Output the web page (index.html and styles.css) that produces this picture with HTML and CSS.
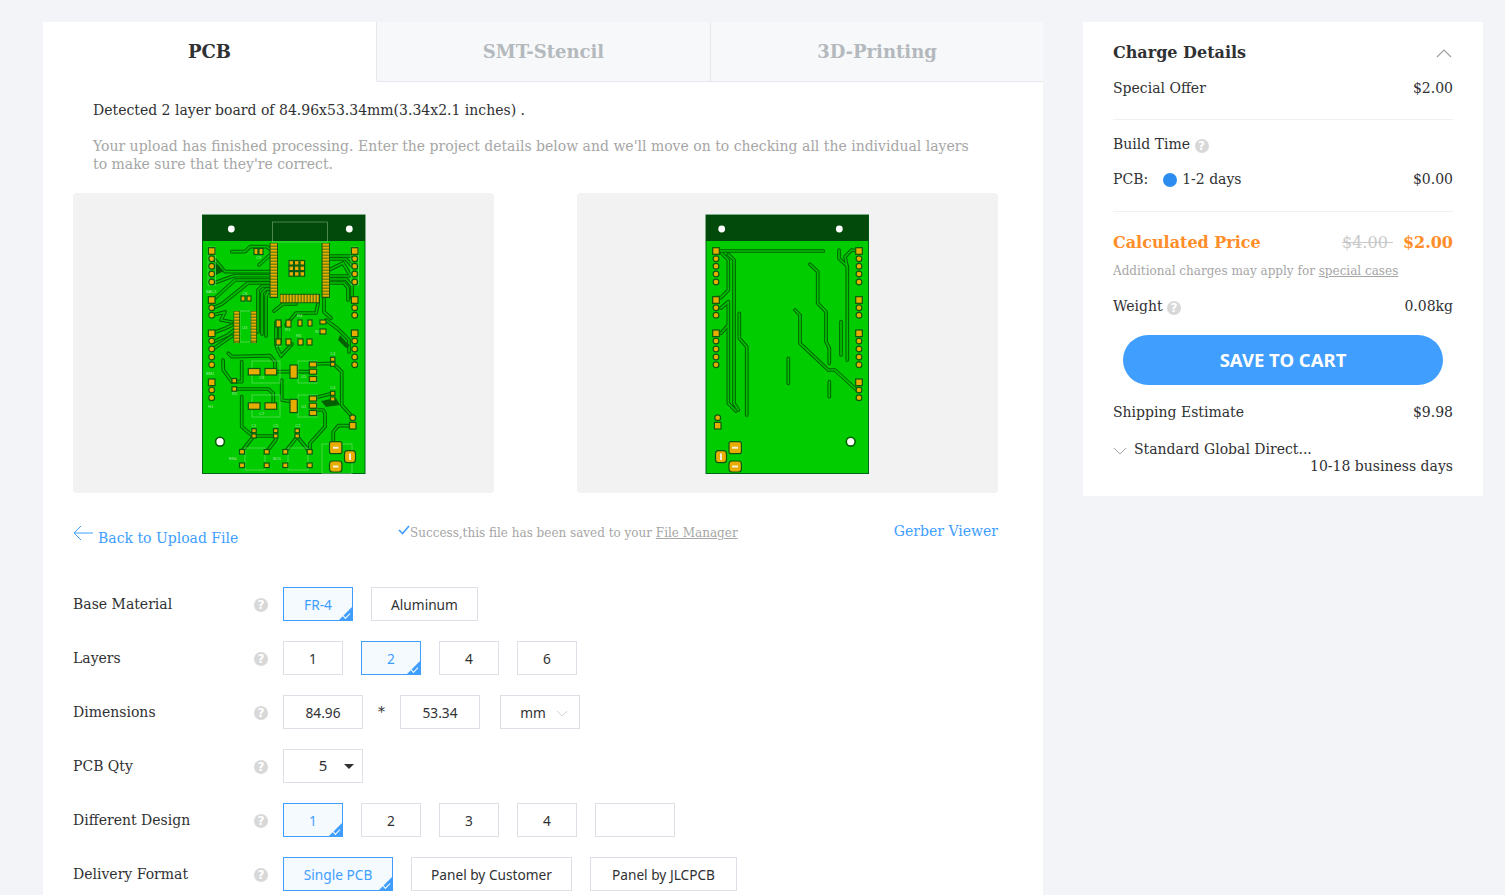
FILE: index.html
```html
<!DOCTYPE html>
<html>
<head>
<meta http-equiv="Content-Type" content="text/html; charset=utf-8" />
<title>Online PCB Quote</title>
<link rel="stylesheet" href="styles.css">
</head>
<body>
<div class="page">
 <div class="main">
  <div class="tabs">
   <div class="tab active">PCB</div>
   <div class="tab">SMT-Stencil</div>
   <div class="tab">3D-Printing</div>
  </div>

  <p class="detected">Detected 2 layer board of 84.96x53.34mm(3.34x2.1 inches) .</p>
  <p class="notice">Your upload has finished processing. Enter the project details below and we'll move on to checking all the individual layers to make sure that they're correct.</p>

  <div class="previews">
   <div class="preview">
    <!-- top layer -->
    <svg class="board" viewBox="201 214 165 260" width="165" height="260">
     <defs>
      <g id="top-tr">
       <polyline points="231.7,251.7 245,251.7 250,246.7 267,246.7 271,250"/>
       <polyline points="259,265 270,255"/>
       <polyline points="215,260 225,271.7 271,271.7"/>
       <polyline points="211.7,282 217,282 234,275.7 271,275.7"/>
       <polyline points="213,300 235,280 271,280"/>
       <polyline points="213,308 222,304 248,283 271,283"/>
       <polyline points="271,286 262,286 258,290 258,332"/>
       <polyline points="271,289 266,289 262,293 262,334"/>
       <polyline points="271,292 268,292 266,296 266,336"/>
       <polyline points="213,315 225,312 221,320 232,322"/>
       <polyline points="213,333 226,328 232,325"/>
       <polyline points="213,342 228,335 234,330"/>
       <polyline points="213,349 232,336"/>
       <polyline points="274,311 283,304 296,304"/>
       <polyline points="286,325 296,313 316,313 318,304"/>
       <polyline points="276,322 276,345"/>
       <polyline points="280,322 280,343"/>
       <polyline points="324,298 324,312 331,318"/>
       <polyline points="329,283 344,283 348,288 348,300"/>
       <polyline points="329,279 346,279 352,286 352,298"/>
       <polyline points="329,276 349,276"/>
       <polyline points="329,256 350,256"/>
       <polyline points="329,259 346,259 352,266"/>
       <polyline points="329,270 343,263 350,275"/>
       <polyline points="326,320 338,329 349,340 349,352"/>
       <polyline points="223,360 223.3,370 232,382"/>
       <polyline points="228.3,353.3 231.7,356.7 270,355.7 275,361.7 275,371.7"/>
       <polyline points="241.7,361.7 241.7,381.7 234,381.7"/>
       <polyline points="234.3,389 268.3,389 273.3,393.3 273.3,406"/>
       <polyline points="281.7,380 281.7,400 291.7,401.7"/>
       <polyline points="276.7,371.7 290,371.7"/>
       <polyline points="297,371.7 310,371.7"/>
       <polyline points="313,364 332.7,363.3 341.7,371.7 341.7,405 352.7,417.3"/>
       <polyline points="313,398.3 332.7,393.3"/>
       <polyline points="313,410 323.3,410 325,413.3 325,426.7 310,443.3 310,451.7"/>
       <polyline points="241.7,396.7 241.7,426.7 253.3,436.7 254,436 275.7,436 275.7,440 266.7,451.7"/>
       <polyline points="253,437 242,451"/>
       <polyline points="297.3,436.7 285.3,451.7"/>
       <polyline points="297.3,436.7 305,446 309,451"/>
       <polyline points="352.7,425.7 338.3,425.7 333.3,431.7 333.3,443.3"/>
       <polyline points="277,340 277,348 281,356 292,344"/>
      </g>
      <g id="bot-tr">
       <polyline points="716,251 823.3,251"/>
       <polyline points="721.7,253.3 728.3,260 728.3,290 721,297.7 716,297.7"/>
       <polyline points="728.3,254.3 734,260 734,403.3 738.3,410"/>
       <polyline points="728.3,301.7 728.3,403.3 736,411"/>
       <polyline points="728.3,301.7 721,308"/>
       <polyline points="728.3,325 721,333.3"/>
       <polyline points="739.3,313.3 739.3,338.3 746.7,346.7 746.7,415"/>
       <polyline points="810,264.3 817.7,271.7 817.7,303.3 826,311.7 826,341.7 829.3,348.3 829.3,363.3"/>
       <polyline points="795,310 800,315 800,343.3 828.3,370 835,370 856.7,390"/>
       <polyline points="788.3,358.3 788.3,383.3"/>
       <polyline points="829.3,381.7 829.3,396.7"/>
       <polyline points="841,321.7 841,355"/>
       <polyline points="859,251 851.7,250 845,256.7 847.3,268 847.3,360"/>
       <polyline points="839,250 839,258.3 847,266"/>
      </g>
      <g id="conn-rows">
       <circle cx="0" cy="258.7" r="2.9"/><circle cx="0" cy="266.3" r="2.9"/><circle cx="0" cy="274" r="2.9"/><circle cx="0" cy="282" r="2.9"/>
       <circle cx="0" cy="307.7" r="2.9"/><circle cx="0" cy="315.3" r="2.9"/>
       <circle cx="0" cy="341" r="2.9"/><circle cx="0" cy="349" r="2.9"/><circle cx="0" cy="357" r="2.9"/><circle cx="0" cy="364.7" r="2.9"/>
       <rect x="-3.3" y="247.7" width="6.6" height="6.6"/><rect x="-3.3" y="296.7" width="6.6" height="6.6"/><rect x="-3.3" y="330" width="6.6" height="6.6"/>
      </g>
     </defs>

     <rect class="pcb" x="202.5" y="215" width="162.5" height="258.5"/>
     <rect class="band" x="202.5" y="215" width="162.5" height="26"/>
     <use href="#top-tr" class="tr-out"/>
     <use href="#top-tr" class="tr-in"/>
     <polygon class="flood" points="215,263 224,271 216,275"/>
     <polygon class="flood" points="340,405 336,398 321,401 326,407"/>
     <polygon class="flood" points="340,335 350,346 346,348 338,340"/>

     <circle class="hole" cx="231.3" cy="229" r="3.4"/>
     <circle class="hole" cx="349.3" cy="229" r="3.4"/>
     <circle class="hole-ring" cx="220" cy="441.7" r="4.4"/>

     <!-- silk -->
     <g class="silk">
      <rect x="272.3" y="222" width="55.4" height="20"/>
      <rect x="240" y="311" width="10.5" height="31"/>
      <rect x="208" y="247" width="7.5" height="38"/>
      <rect x="351" y="247" width="7.5" height="38"/>
      <rect x="252" y="361" width="28" height="22"/>
      <rect x="252" y="395" width="28" height="22"/>
      <rect x="298" y="361" width="19" height="22"/>
      <rect x="298" y="395" width="19" height="22"/>
      <rect x="245" y="448" width="20" height="22"/>
      <rect x="288" y="448" width="20" height="22"/>
      <rect x="322" y="444" width="30" height="29.5"/>
     </g>
     <g class="silk-text">
      <text x="256" y="259">C9</text><text x="206" y="293">BAC1</text><text x="242" y="295">C8</text>
      <text x="242" y="329">U3</text><text x="285" y="331">R1</text><text x="297" y="317">R4</text>
      <text x="296" y="337">R6</text><text x="315" y="333">R3</text><text x="276" y="347">R5</text>
      <text x="259" y="379">C8</text><text x="301" y="378">U5</text><text x="259" y="415">C7</text>
      <text x="301" y="408">U1</text><text x="232" y="395">R2</text><text x="206" y="375">BM1</text>
      <text x="208" y="408">H1</text><text x="251" y="427">C1</text><text x="273" y="427">C5</text>
      <text x="295" y="427">C2</text><text x="330" y="355">C4</text><text x="330" y="389">C4</text>
      <text x="229" y="460">EN0</text><text x="273" y="460">BO1</text>
     </g>

     <!-- pads -->
     <g class="pad-strip">
      <rect x="269.5" y="243" width="8.5" height="55"/>
      <rect x="321.5" y="243" width="8.5" height="55"/>
      <rect x="280" y="293.8" width="40" height="9.4"/>
      <rect x="233.5" y="311" width="6.5" height="32"/>
      <rect x="250.5" y="311" width="6.5" height="32"/>
     </g>
     <g class="pad-lines">
      <line class="v" x1="273.8" y1="243.5" x2="273.8" y2="297.5"/>
      <line class="v" x1="325.8" y1="243.5" x2="325.8" y2="297.5"/>
      <line class="h" x1="280.5" y1="298.5" x2="319.5" y2="298.5"/>
      <line class="c" x1="236.7" y1="311.5" x2="236.7" y2="342.5"/>
      <line class="c" x1="253.7" y1="311.5" x2="253.7" y2="342.5"/>
     </g>
     <g class="pad">
      <rect x="289" y="260.5" width="4.6" height="4.6"/><rect x="294.4" y="260.5" width="4.6" height="4.6"/><rect x="300" y="260.5" width="4.6" height="4.6"/>
      <rect x="289" y="266" width="4.6" height="4.6"/><rect x="294.4" y="266" width="4.6" height="4.6"/><rect x="300" y="266" width="4.6" height="4.6"/>
      <rect x="289" y="271.6" width="4.6" height="4.6"/><rect x="294.4" y="271.6" width="4.6" height="4.6"/><rect x="300" y="271.6" width="4.6" height="4.6"/>
      <use href="#conn-rows" x="211.7"/>
      <use href="#conn-rows" x="354.7"/>
      <circle cx="211.7" cy="390" r="2.9"/><circle cx="211.7" cy="397.7" r="2.9"/><rect x="208.4" y="379" width="6.6" height="6.6"/>
      <rect x="254" y="248.5" width="4" height="6"/><rect x="259" y="248.5" width="4" height="6"/>
      <rect x="241" y="296" width="4" height="5"/><rect x="247" y="296" width="4" height="5"/>
      <rect x="276" y="320" width="5" height="7"/><rect x="286" y="320" width="5" height="7"/>
      <rect x="298" y="320" width="4" height="6"/><rect x="308" y="320" width="4" height="6"/>
      <rect x="320" y="320" width="6" height="4"/><rect x="320" y="329" width="6" height="5"/>
      <rect x="276" y="339" width="5" height="6"/><rect x="286" y="339" width="5" height="6"/>
      <rect x="298" y="339" width="5" height="6"/><rect x="307" y="339" width="5" height="6"/>
      <rect x="248.3" y="368.5" width="11.7" height="6.5"/><rect x="265" y="368.5" width="11.7" height="6.5"/>
      <rect x="290" y="365" width="7.3" height="13.3"/>
      <rect x="309.3" y="362" width="7.4" height="5"/><rect x="309.3" y="369.2" width="7.4" height="5"/><rect x="309.3" y="376.5" width="7.4" height="5"/>
      <rect x="248.3" y="402.8" width="11.7" height="6.5"/><rect x="265" y="402.8" width="11.7" height="6.5"/>
      <rect x="290" y="399.3" width="7.3" height="13.3"/>
      <rect x="309.3" y="396" width="7.4" height="5"/><rect x="309.3" y="403.2" width="7.4" height="5"/><rect x="309.3" y="410.5" width="7.4" height="5"/>
      <rect x="330.5" y="357.3" width="4.4" height="4"/><rect x="330.5" y="362.3" width="4.4" height="4"/>
      <rect x="330.5" y="391.3" width="4.4" height="4"/><rect x="330.5" y="397" width="4.4" height="4"/>
      <rect x="232" y="378.5" width="4.6" height="4.4"/><rect x="232" y="386.8" width="4.6" height="4.4"/>
      <rect x="251.8" y="428.7" width="4.4" height="4"/><rect x="251.8" y="434" width="4.4" height="4"/>
      <rect x="273.5" y="428.7" width="4.4" height="4"/><rect x="273.5" y="434" width="4.4" height="4"/>
      <rect x="295" y="428.7" width="4.4" height="4"/><rect x="295" y="434" width="4.4" height="4"/>
      <rect x="239.5" y="449.5" width="5" height="4.6"/><rect x="264.2" y="449.5" width="5" height="4.6"/><rect x="282.8" y="449.5" width="5" height="4.6"/><rect x="307.2" y="449.5" width="5" height="4.6"/>
      <rect x="239.5" y="463" width="5" height="4.6"/><rect x="264.2" y="463" width="5" height="4.6"/><rect x="282.8" y="463" width="5" height="4.6"/><rect x="307.2" y="463" width="5" height="4.6"/>
      <circle cx="352.7" cy="417.7" r="2.9"/><rect x="349.4" y="422.4" width="6.6" height="6.6"/>
      <rect x="329.5" y="441.7" width="12.4" height="12" rx="2"/>
      <rect x="344.5" y="450.7" width="11" height="12" rx="3"/>
      <rect x="329.5" y="461" width="12.4" height="11" rx="3"/>
     </g>
     <g class="slot">
      <line x1="333" y1="447.7" x2="338.5" y2="447.7"/>
      <line x1="350" y1="453.5" x2="350" y2="460"/>
      <line x1="333" y1="466.5" x2="338.5" y2="466.5"/>
     </g>
    </svg>
   </div>

   <div class="preview">
    <!-- bottom layer -->
    <svg class="board" viewBox="705 214 165 260" width="165" height="260">
     <rect class="pcb" x="706" y="215" width="162.5" height="258.5"/>
     <rect class="band" x="706" y="215" width="162.5" height="26"/>
     <use href="#bot-tr" class="tr-out"/>
     <use href="#bot-tr" class="tr-in"/>
     <circle class="hole" cx="721.7" cy="229" r="3.4"/>
     <circle class="hole" cx="839.3" cy="229" r="3.4"/>
     <circle class="hole-ring" cx="850.7" cy="441.7" r="4.4"/>
     <g class="pad">
      <use href="#conn-rows" x="716"/>
      <use href="#conn-rows" x="859"/>
      <circle cx="859" cy="390" r="2.9"/><circle cx="859" cy="397.7" r="2.9"/><rect x="855.7" y="379" width="6.6" height="6.6"/>
      <circle cx="717.7" cy="417.7" r="2.9"/><rect x="714.4" y="422.4" width="6.6" height="6.6"/>
      <rect x="729" y="441.7" width="12.4" height="12" rx="2"/>
      <rect x="715.5" y="450.7" width="11" height="12" rx="3"/>
      <rect x="729" y="461" width="12.4" height="11" rx="3"/>
     </g>
     <g class="slot">
      <line x1="732" y1="447.7" x2="738" y2="447.7"/>
      <line x1="721" y1="453.5" x2="721" y2="460"/>
      <line x1="732" y1="466.5" x2="738" y2="466.5"/>
     </g>
    </svg>
   </div>
  </div>

  <div class="links">
   <a class="back">
    <svg class="back-arrow" viewBox="0 0 20 16" width="20" height="16"><path d="M8 1 L1 8 L8 15 M1 8 H20"/></svg>
    <span>Back to Upload File</span>
   </a>
   <div class="saved">
    <svg class="saved-check" viewBox="0 0 12 10" width="12" height="10"><path d="M1 5 L4.5 8.5 L11 1"/></svg>Success,this file has been saved to your <u>File Manager</u>
   </div>
   <a class="gerber">Gerber Viewer</a>
  </div>

  <div class="form">
   <div class="row">
    <label>Base Material</label><i class="help">?</i>
    <div class="opts"><span class="opt on w70">FR-4</span><span class="opt w107">Aluminum</span></div>
   </div>
   <div class="row">
    <label>Layers</label><i class="help">?</i>
    <div class="opts"><span class="opt w60">1</span><span class="opt on w60">2</span><span class="opt w60">4</span><span class="opt w60">6</span></div>
   </div>
   <div class="row">
    <label>Dimensions</label><i class="help">?</i>
    <div class="opts dims">
     <span class="opt w80">84.96</span><b class="times">*</b><span class="opt w80">53.34</span>
     <span class="opt w80 unit">mm<svg class="unit-arrow" viewBox="0 0 12 7" width="12" height="7"><path d="M1 1 L6 6 L11 1"/></svg></span>
    </div>
   </div>
   <div class="row">
    <label>PCB Qty</label><i class="help">?</i>
    <div class="opts"><span class="opt w80 qty">5<em class="caret"></em></span></div>
   </div>
   <div class="row">
    <label>Different Design</label><i class="help">?</i>
    <div class="opts"><span class="opt on w60">1</span><span class="opt w60">2</span><span class="opt w60">3</span><span class="opt w60">4</span><span class="opt w80"></span></div>
   </div>
   <div class="row">
    <label>Delivery Format</label><i class="help">?</i>
    <div class="opts"><span class="opt on w110">Single PCB</span><span class="opt w161">Panel by Customer</span><span class="opt w147">Panel by JLCPCB</span></div>
   </div>
  </div>
 </div>

 <div class="side">
  <div class="side-head">
   <h3>Charge Details</h3>
   <svg class="chev" viewBox="0 0 16 10" width="16" height="10"><path d="M1 9 L8 2 L15 9"/></svg>
  </div>
  <div class="line offer"><span>Special Offer</span><span>$2.00</span></div>
  <div class="sep"></div>
  <div class="line build"><span>Build Time <i class="help">?</i></span></div>
  <div class="line pcb-time"><span>PCB:<em class="dot"></em>1-2 days</span><span>$0.00</span></div>
  <div class="sep"></div>
  <div class="line price"><span>Calculated Price</span><span><s>$4.00&nbsp;</s><b>$2.00</b></span></div>
  <p class="extra">Additional charges may apply for <u>special cases</u></p>
  <div class="line weight"><span>Weight <i class="help">?</i></span><span>0.08kg</span></div>
  <div class="save">SAVE TO CART</div>
  <div class="line ship"><span>Shipping Estimate</span><span>$9.98</span></div>
  <div class="method">
   <svg class="method-arrow" viewBox="0 0 14 8" width="14" height="8"><path d="M1 1 L7 7 L13 1"/></svg>Standard Global Direct...
  </div>
  <div class="days">10-18 business days</div>
 </div>
</div>
</body>
</html>
```

FILE: styles.css
```css
* {
	margin: 0;
	padding: 0;
	box-sizing: border-box;
}
html, body {
	height: 895px;
	overflow: hidden;
}
body {
	background: #f2f4f7;
	font-family: "DejaVu Serif", serif;
	font-size: 14px;
	color: #303133;
}
.page {
	display: flex;
	align-items: flex-start;
	gap: 40px;
	padding: 22px 0 0 43px;
	height: 895px;
}

/* left card */
.main {
	width: 1000px;
	height: 873px;
	background: #fff;
	flex: none;
}
.tabs {
	display: flex;
	height: 60px;
}
.tab {
	width: 334px;
	line-height: 60px;
	text-align: center;
	font-size: 18px;
	font-weight: bold;
	color: #b4b9bd;
	background: #f7f8fa;
	border-bottom: 1px solid #e4e7ed;
	border-right: 1px solid #e4e7ed;
}
.tab:last-child {
	width: 332px;
	border-right: 0;
}
.tab.active {
	color: #303133;
	background: #fff;
	border-bottom-color: #fff;
}
.detected {
	padding: 19px 0 0 50px;
	line-height: 18px;
}
.notice {
	padding: 19px 70px 0 50px;
	line-height: 17.5px;
	color: #a6a6a6;
}
.previews {
	display: flex;
	gap: 83px;
	padding: 20px 0 0 30px;
}
.preview {
	width: 421px;
	height: 300px;
	background: #f2f2f2;
	border-radius: 4px;
	display: flex;
	justify-content: center;
	padding-top: 21px;
}
.board {
	display: block;
}

/* board art */
.pcb { fill: #00cc00; stroke: #00661a; stroke-width: 1; }
.band { fill: #024a0c; }
.tr-out, .tr-in { fill: none; stroke-linejoin: round; stroke-linecap: round; }
.tr-out { stroke: #006000; stroke-width: 3.7; }
.tr-in { stroke: #00c000; stroke-width: 1.7; }
.flood { fill: #006000; }
.hole { fill: #fff; }
.hole-ring { fill: #fff; stroke: #006000; stroke-width: 1.6; }
.silk rect { fill: none; stroke: #cfeec9; stroke-width: .6; opacity: .6; }
.silk-text text { fill: #d8f5d2; font-family: "Liberation Sans", sans-serif; font-size: 4px; opacity: .8; }
.pad-strip rect { fill: #0a5c10; }
.pad-lines line { stroke: #e8ac00; }
.pad-lines .v { stroke-width: 6.5; stroke-dasharray: 2.2 .8; }
.pad-lines .h { stroke-width: 7.4; stroke-dasharray: 2.2 .8; }
.pad-lines .c { stroke-width: 5; stroke-dasharray: 2.2 .8; }
.pad { fill: #e8ac00; stroke: #085a0e; stroke-width: 1.2; }
.slot line { stroke: #f6f0d8; stroke-width: 2; }

.links {
	display: flex;
	padding: 24px 45px 0 30px;
	height: 94px;
}
.back {
	display: flex;
	align-items: flex-start;
	color: #409eff;
	width: 320px;
	line-height: 18px;
}
.back span {
	padding: 12px 0 0 5px;
}
.back-arrow {
	fill: none;
	stroke: #409eff;
	stroke-width: 1;
	margin-top: 8px;
}
.saved {
	color: #a6a6a6;
	font-size: 12px;
	line-height: 18px;
	padding-top: 7px;
	margin-left: 5px;
}
.saved-check {
	fill: none;
	stroke: #409eff;
	stroke-width: 1.6;
	vertical-align: 2px;
}
.gerber {
	color: #409eff;
	line-height: 18px;
	padding-top: 5px;
	margin-left: auto;
	text-align: right;
	white-space: nowrap;
}

/* form */
.form {
	display: flex;
	flex-direction: column;
	gap: 20px;
	padding-left: 30px;
}
.row {
	display: flex;
	align-items: center;
	height: 34px;
}
.row label {
	width: 181px;
}
.row > .help {
	margin: 1px 15px 0 0;
}
.help {
	display: inline-block;
	width: 14px;
	height: 14px;
	border-radius: 50%;
	background: #d8d8d8;
	color: #fff;
	font: bold 12px/14px "DejaVu Sans", sans-serif;
	font-style: normal;
	text-align: center;
	vertical-align: -1px;
	flex: none;
}
.opts {
	display: flex;
	gap: 18px;
}
.dims {
	gap: 0;
}
.times {
	width: 37px;
	text-align: center;
	font-weight: normal;
	font-size: 14px;
	line-height: 34px;
}
.dims .unit {
	margin-left: 20px;
	padding-right: 14px;
	position: relative;
}
.opt {
	display: block;
	position: relative;
	height: 34px;
	line-height: 34px;
	border: 1px solid #dcdfe6;
	font-family: "Noto Sans", sans-serif;
	font-size: 13.7px;
	text-align: center;
	color: #303133;
	background: #fff;
}
.w60 { width: 60px; }
.w70 { width: 70px; }
.w80 { width: 80px; }
.w107 { width: 107px; }
.w110 { width: 110px; }
.w147 { width: 147px; }
.w161 { width: 161px; }
.opt.on {
	border-color: #409eff;
	background: #f5faff;
	color: #409eff;
}
/* corner tick on the selected option */
.opt.on::after {
	content: "";
	position: absolute;
	right: 0;
	bottom: 0;
	border-style: solid;
	border-width: 0 0 13px 13px;
	border-color: transparent transparent #409eff transparent;
}
.opt.on::before {
	content: "";
	position: absolute;
	z-index: 1;
	right: 2px;
	bottom: 3px;
	width: 6px;
	height: 3px;
	border-left: 1px solid #fff;
	border-bottom: 1px solid #fff;
	transform: rotate(-45deg);
}
.unit-arrow {
	position: absolute;
	right: 11px;
	top: 14px;
	fill: none;
	stroke: #d3d6dc;
	stroke-width: 1;
}
.qty {
	font-size: 15px;
	line-height: 30px;
}
.caret {
	position: absolute;
	right: 8px;
	top: 14px;
	border-style: solid;
	border-width: 5px 5px 0 5px;
	border-color: #303133 transparent transparent transparent;
}

/* right card */
.side {
	width: 400px;
	height: 474px;
	background: #fff;
	padding: 0 30px;
	flex: none;
}
.side-head {
	display: flex;
	justify-content: space-between;
	align-items: center;
	height: 60px;
}
.side-head h3 {
	font-size: 16px;
}
.chev {
	fill: none;
	stroke: #a0a0a0;
	stroke-width: 1.2;
	margin: 2px 1px 0 0;
}
.line {
	display: flex;
	justify-content: space-between;
	line-height: 18px;
}
.offer {
	margin-top: -3px;
}
.sep {
	height: 1px;
	background: #f0f0f0;
}
.offer + .sep {
	margin-top: 22px;
}
.build {
	margin-top: 15px;
}
.pcb-time {
	margin-top: 17px;
}
.pcb-time + .sep {
	margin-top: 23px;
}
.dot {
	display: inline-block;
	width: 14px;
	height: 14px;
	border-radius: 50%;
	background: #2d8cf0;
	margin: 0 5px 0 15px;
	vertical-align: -3px;
}
.price {
	margin-top: 22px;
	color: #ff8d29;
	font-weight: bold;
	font-size: 16px;
}
.price s {
	color: #c8c8c8;
	font-weight: normal;
	font-size: 16px;
	margin-right: 10px;
}
.extra {
	margin-top: 10px;
	font-size: 12px;
	line-height: 18px;
	color: #a6a6a6;
}
.weight {
	margin-top: 17px;
}
.save {
	width: 320px;
	height: 50px;
	margin: 20px 0 0 10px;
	border-radius: 25px;
	background: #409eff;
	color: #fff;
	font-family: "Noto Sans", sans-serif;
	font-weight: bold;
	font-size: 18.5px;
	line-height: 50px;
	text-align: center;
}
.ship {
	margin-top: 18px;
}
.method {
	margin-top: 19px;
	line-height: 18px;
	white-space: nowrap;
}
.method-arrow {
	fill: none;
	stroke: #8d8d8d;
	stroke-width: .8;
	margin-right: 7px;
	vertical-align: -1px;
}
.days {
	text-align: right;
	line-height: 18px;
	margin-top: -1px;
}
```
